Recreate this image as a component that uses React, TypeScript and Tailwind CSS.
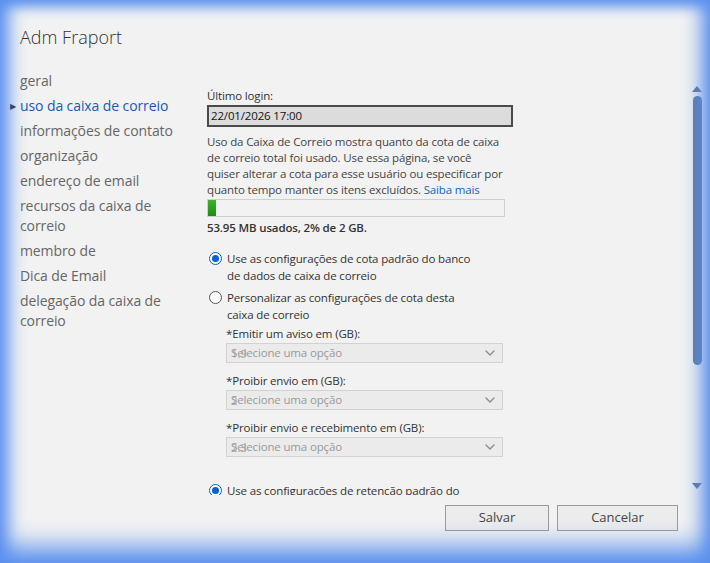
import { ChevronDown } from "lucide-react";

const navItems = [
  "geral",
  "uso da caixa de correio",
  "informações de contato",
  "organização",
  "endereço de email",
  "recursos da caixa de correio",
  "membro de",
  "Dica de Email",
  "delegação da caixa de correio",
];

const quotas = [
  { label: "*Emitir um aviso em (GB):", value: "1.9" },
  { label: "*Proibir envio em (GB):", value: "2" },
  { label: "*Proibir envio e recebimento em (GB):", value: "2.3" },
];

function Radio({ checked }: { checked?: boolean }) {
  return (
    <span
      className={`mt-[2px] flex h-[13px] w-[13px] shrink-0 items-center justify-center rounded-full border bg-white ${
        checked ? "border-[#0a62c9]" : "border-[#555]"
      }`}
    >
      {checked && <span className="h-[7px] w-[7px] rounded-full bg-[#0a62c9]" />}
    </span>
  );
}

function QuotaSelect({ label, value }: { label: string; value: string }) {
  return (
    <div className="flex flex-col">
      <span className="leading-[17px] text-[#333]">{label}</span>
      <div className="relative mt-[1px] flex h-[20px] w-[277px] items-center border border-[#d2d2d2] bg-[#ebebeb] pl-[4px] pr-[4px] text-[#9a9a9a]">
        <span className="absolute left-[4px] top-[1px] text-[#ababab]">{value}</span>
        <span className="relative flex-1">Selecione uma opção</span>
        <ChevronDown size={16} strokeWidth={2} className="text-[#8c8c8c]" />
      </div>
    </div>
  );
}

export default function App() {
  return (
    <div
      className="relative flex h-[563px] w-[710px] flex-col overflow-hidden bg-[#f2f2f2] text-[11.5px] tracking-[-0.15px] text-[#444]"
      style={{ fontFamily: '"Segoe UI", "Open Sans", sans-serif' }}
    >
      <h1 className="pl-[20px] pt-[24px] text-[18px] font-light leading-[26px] tracking-normal text-[#333]">Adm Fraport</h1>

      <div className="mt-[15px] flex h-[430px]">
        <nav className="flex w-[187px] shrink-0 flex-col gap-[5px] pl-[20px] pt-[6px] text-[14px] leading-[20px] tracking-[-0.1px] text-[#666]">
          {navItems.map((item) => (
            <div key={item} className="relative">
              {item === "uso da caixa de correio" && (
                <span className="absolute left-[-10px] top-[0px] text-[8px] text-[#222]">▶</span>
              )}
              <span className={item === "uso da caixa de correio" ? "text-[#1a5bab]" : ""}>{item}</span>
            </div>
          ))}
        </nav>

        <div className="flex flex-1 overflow-hidden">
          <div className="flex-1 overflow-hidden whitespace-nowrap pl-[20px] pt-[22px]">
            <div className="leading-[17px] text-[#333]">Último login:</div>
            <div className="mt-[1px] flex h-[22px] w-[306px] items-center border-2 border-[#4a4a4a] bg-[#dcdcdc] pl-[2px] text-[#111]">
              22/01/2026 17:00
            </div>

            <p className="mt-[7px] leading-[16px] text-[#444]">
              Uso da Caixa de Correio mostra quanto da cota de caixa
              <br />
              de correio total foi usado. Use essa página, se você
              <br />
              quiser alterar a cota para esse usuário ou especificar por
              <br />
              quanto tempo manter os itens excluídos. <span className="text-[#1a5fb4]">Saiba mais</span>
            </p>

            <div className="mt-[1px] flex h-[18px] w-[298px] border border-[#cfcfcf] bg-[#f2f2f2]">
              <div className="h-full w-[8px] bg-gradient-to-b from-[#3cb42a] to-[#1f8a14]" />
            </div>

            <div className="mt-[2px] font-semibold leading-[17px] text-[#333]">53.95 MB usados, 2% de 2 GB.</div>

            <div className="mt-[14px] flex flex-col gap-[5px] pl-[2px] text-[#333]">
              <label className="flex gap-[5px]">
                <Radio checked />
                <span className="leading-[17px]">
                  Use as configurações de cota padrão do banco
                  <br />
                  de dados de caixa de correio
                </span>
              </label>
              <label className="flex gap-[5px]">
                <Radio />
                <span className="leading-[17px]">
                  Personalizar as configurações de cota desta
                  <br />
                  caixa de correio
                </span>
              </label>
            </div>

            <div className="mt-[2px] flex flex-col gap-[9px] pl-[19px]">
              {quotas.map((q) => (
                <QuotaSelect key={q.label} label={q.label} value={q.value} />
              ))}
            </div>

            <label className="mt-[25px] flex gap-[5px] pl-[2px] text-[#333]">
              <Radio checked />
              <span className="leading-[17px]">Use as configurações de retenção padrão do</span>
            </label>
          </div>

          <div className="flex w-[26px] shrink-0 flex-col items-center pb-[6px] pt-[21px]">
            <span className="h-0 w-0 border-x-[5px] border-b-[6px] border-x-transparent border-b-[#5d7499]" />
            <div className="mt-[4px] h-[269px] w-[9px] rounded-full bg-[#5d7aa6]" />
            <div className="flex-1" />
            <span className="h-0 w-0 border-x-[5px] border-t-[6px] border-x-transparent border-t-[#5d7499]" />
          </div>
        </div>
      </div>

      <div className="mt-[10px] flex justify-end gap-[8px] pr-[32px] tracking-normal">
        <button className="h-[26px] w-[104px] border border-[#9a9a9a] bg-[#ececec] text-[13px] text-[#444]">Salvar</button>
        <button className="h-[26px] w-[121px] border border-[#9a9a9a] bg-[#ececec] text-[13px] text-[#444]">Cancelar</button>
      </div>

      <div className="pointer-events-none absolute inset-0 shadow-[inset_16px_0_18px_-8px_#5a90ee,inset_-16px_0_20px_-8px_#5a90ee,inset_0_12px_14px_-6px_#5a90ee,inset_0_-26px_26px_-10px_#5a90ee]" />
    </div>
  );
}
